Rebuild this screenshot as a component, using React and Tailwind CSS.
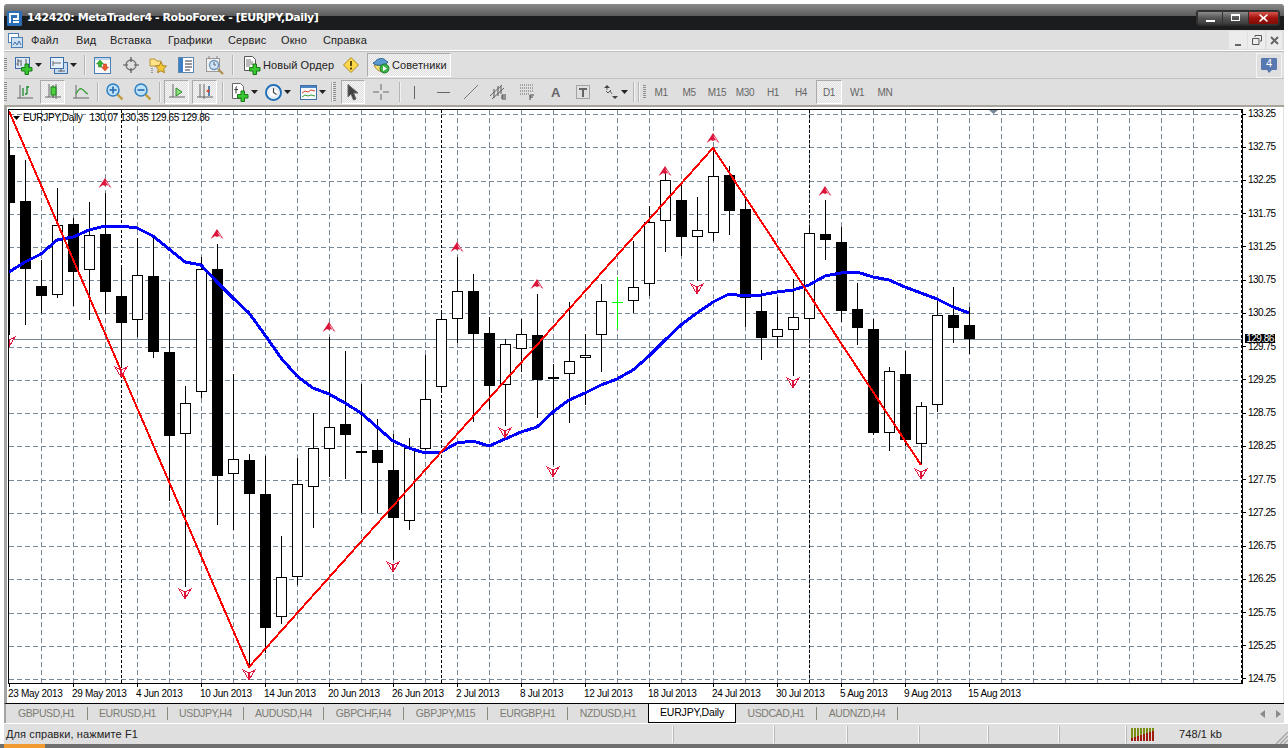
import React from 'react';

// [x, high, low, bodyTop, bodyBottom, white]
const candles = [
  [9, 140, 335, 155, 203, 0], [25, 160, 325, 201, 269, 0], [41, 260, 313, 286, 296, 0], [57, 188, 298, 225, 295, 1],
  [73, 218, 306, 224, 272, 0], [89, 202, 320, 235, 270, 1], [105, 193, 314, 234, 292, 0], [121, 265, 365, 296, 323, 0],
  [137, 238, 337, 275, 320, 1], [153, 237, 358, 276, 352, 0], [169, 282, 501, 352, 436, 0], [185, 386, 587, 403, 434, 1],
  [201, 257, 398, 269, 392, 1], [217, 244, 525, 269, 476, 0], [233, 374, 530, 459, 474, 1], [249, 454, 667, 460, 494, 0],
  [265, 456, 653, 494, 628, 0], [281, 536, 624, 577, 617, 1], [297, 458, 585, 484, 577, 1], [313, 413, 528, 448, 487, 1],
  [329, 337, 477, 427, 449, 1], [345, 351, 479, 424, 435, 0], [361, 384, 513, 451, 453, 0], [377, 419, 513, 450, 463, 0],
  [393, 434, 560, 470, 518, 0], [409, 438, 530, 448, 521, 1], [425, 355, 450, 399, 449, 1], [441, 310, 393, 319, 387, 1],
  [457, 257, 343, 291, 319, 1], [473, 274, 422, 291, 334, 0], [489, 317, 409, 333, 386, 0], [505, 339, 426, 344, 385, 1],
  [521, 319, 372, 334, 349, 1], [537, 294, 418, 335, 380, 0], [553, 364, 465, 377, 379, 0], [569, 302, 423, 361, 374, 1],
  [585, 334, 405, 355, 358, 1], [601, 284, 372, 301, 335, 1], [633, 241, 313, 287, 301, 1],
  [649, 206, 296, 222, 284, 1], [665, 170, 252, 180, 221, 1], [681, 185, 256, 200, 237, 0], [697, 197, 281, 230, 237, 1],
  [713, 150, 241, 176, 233, 1], [729, 166, 235, 175, 211, 0], [745, 198, 327, 209, 298, 0], [761, 290, 360, 311, 338, 0],
  [777, 297, 348, 329, 337, 1], [793, 279, 376, 317, 330, 1], [809, 228, 336, 233, 319, 1], [825, 200, 260, 234, 240, 0],
  [841, 227, 322, 242, 311, 0], [857, 283, 345, 309, 328, 0], [873, 319, 435, 329, 433, 0], [889, 367, 451, 371, 433, 1],
  [905, 351, 446, 374, 440, 0], [921, 402, 465, 406, 444, 1], [937, 300, 412, 315, 405, 1], [953, 287, 343, 315, 328, 0],
  [969, 307, 354, 325, 339, 0],
];

const ma = '9,272 25,262 41,254 57,240 73,237 89,230 105,226 121,226 137,228 153,236 169,249 185,262 201,265 217,282 233,298 249,313 265,335 281,358 297,376 313,388 329,394 345,403 361,413 377,427 393,441 409,448 425,453 441,452 457,443 473,441 489,446 505,439 521,432 537,427 553,412 569,400 585,393 601,385 617,379 633,370 649,356 665,340 681,325 697,313 713,302 729,294 745,296 761,295 777,292 793,290 809,285 825,276 841,273 857,272 873,277 889,280 905,287 921,293 937,299 953,307 969,313';

const upMarks = [[105, 183], [217, 234], [329, 327], [457, 247], [537, 284], [665, 171], [713, 138], [825, 191]];
const downMarks = [[9, 342], [121, 372], [185, 594], [249, 675], [393, 567], [505, 433], [553, 472], [697, 289], [793, 383], [921, 474]];

const gridY = [114, 147, 181, 214, 247, 280, 313, 347, 380, 413, 446, 480, 513, 546, 579, 613, 646, 679];
const gridX = Array.from({ length: 37 }, (_, i) => 41 + i * 32);

const prices = ['133.25', '132.75', '132.25', '131.75', '131.25', '130.75', '130.25', '129.75', '129.25', '128.75', '128.25', '127.75', '127.25', '126.75', '126.25', '125.75', '125.25', '124.75'];
const dates = ['23 May 2013', '29 May 2013', '4 Jun 2013', '10 Jun 2013', '14 Jun 2013', '20 Jun 2013', '26 Jun 2013', '2 Jul 2013', '8 Jul 2013', '12 Jul 2013', '18 Jul 2013', '24 Jul 2013', '30 Jul 2013', '5 Aug 2013', '9 Aug 2013', '15 Aug 2013'];

function Chart() {
  return (
    <svg width="1235" height="575" viewBox="8 109 1235 575" className="block shrink-0">
      <rect x="8" y="109" width="1235" height="575" fill="#fff" />
      <g stroke="#778899" strokeWidth="1" shapeRendering="crispEdges">
        {gridY.map((y) => <line key={y} x1="9" x2="1241" y1={y + 0.5} y2={y + 0.5} strokeDasharray="5 3" />)}
        {gridX.map((x) => <line key={x} x1={x + 0.5} x2={x + 0.5} y1="110" y2="683" strokeDasharray="5 3" />)}
        <line x1="9" x2="1242" y1="339.5" y2="339.5" />
      </g>
      <path d="M989 110h9l-4.5 4z" fill="#778899" />
      <g stroke="#000" strokeWidth="1" shapeRendering="crispEdges">
        {[121, 441, 809, 1241].map((x) => <line key={x} x1={x + 0.5} x2={x + 0.5} y1="110" y2="683" strokeDasharray="3 2" />)}
      </g>
      <g shapeRendering="crispEdges">
        {candles.map(([x, hi, lo, top, bot, white]) => (
          <g key={x}>
            <rect x={x} y={hi} width="1" height={lo - hi} fill="#000" />
            {white ? (
              <rect x={x - 4.5} y={top + 0.5} width="10" height={bot - top - 1} fill="#fff" stroke="#000" />
            ) : (
              <rect x={x - 5} y={top} width="11" height={bot - top} fill="#000" />
            )}
          </g>
        ))}
        <rect x="617" y="277" width="1" height="52" fill="#00ff00" />
        <rect x="612" y="302" width="11" height="1" fill="#00ff00" />
      </g>
      <polyline points={ma} fill="none" stroke="#0000ff" strokeWidth="3" strokeLinejoin="round" shapeRendering="crispEdges" />
      <polyline points="9,111 249,667 713,148 921,465" fill="none" stroke="#ff0000" strokeWidth="2" shapeRendering="crispEdges" />
      {upMarks.map(([x, y]) => (
        <g key={x} transform={`translate(${x} ${y})`}>
          <path d="M0-5L6.500 5 2 2 0 3-2 2-6.500 5Z" fill="#dc143c" />
          <path d="M1-1.500L4 3" stroke="#fff" strokeWidth="0.800" />
        </g>
      ))}
      {downMarks.map(([x, y]) => (
        <g key={x} transform={`translate(${x} ${y})`} shapeRendering="crispEdges">
          <path d="M-6-5L-1-2.500H1L6-5 0 5Z" fill="#fff" stroke="#dc143c" strokeWidth="1" />
          <path d="M-1-2H1V4H-1Z" fill="#dc143c" />
        </g>
      ))}
      <rect x="8.500" y="109.500" width="1234" height="574" fill="none" stroke="#000" shapeRendering="crispEdges" />
    </svg>
  );
}

function Grip({ h = 'h-[20px]' }) {
  return <div className={`w-[3px] shrink-0 ${h} bg-[repeating-linear-gradient(#8f8f8f_0_1px,transparent_1px_2px)]`} />;
}

function Sep({ className = '' }) {
  return <div className={`w-[2px] h-[20px] shrink-0 border-l border-[#b5b5b5] bg-[#f2f2f2] ${className}`} />;
}

function DropArrow({ className = '' }) {
  return (
    <svg width="7" height="4" viewBox="0 0 7 4" className={`shrink-0 ${className}`}>
      <path d="M0 0h7L3.500 4z" fill="#222" />
    </svg>
  );
}

function Pressed({ className = '', children }) {
  return (
    <div className={`shrink-0 flex items-center border border-t-[#aaa] border-l-[#aaa] border-r-white border-b-white bg-[repeating-conic-gradient(#dedede_0_25%,#f6f6f6_0_50%)] bg-size-[2px_2px] ${className}`}>
      {children}
    </div>
  );
}

const Plus = () => <path d="M10 8h3.500v3.500H17V15h-3.500v3.500H10V15H6.500v-3.500H10z" fill="#39c632" stroke="#167a16" strokeWidth="1" />;

function Ico({ w = 16, h = 16, className = '', children }) {
  return (
    <svg width={w} height={h} viewBox={`0 0 ${w} ${h}`} className={`shrink-0 ${className}`}>
      {children}
    </svg>
  );
}

const AddChartIcon = ({ className }) => (
  <Ico w={18} h={19} className={className}>
    <rect x="0.500" y="1.500" width="14" height="11" fill="#dce9f7" stroke="#3d6ea8" />
    <path d="M3 3v7M3 5h2M3 8H1.500M6 4v6M11 3v6" stroke="#555" fill="none" />
    <Plus />
  </Ico>
);

const ProfilesIcon = ({ className }) => (
  <Ico w={18} h={18} className={className}>
    <rect x="4.500" y="6.500" width="13" height="11" fill="#c9ddf2" stroke="#3d6ea8" />
    <rect x="0.500" y="1.500" width="13" height="11" fill="#e6f0fa" stroke="#3d6ea8" />
    <path d="M3 5v5M3 7h8M8 15h7M11 13v3" stroke="#666" fill="none" />
  </Ico>
);

const WatchIcon = ({ className }) => (
  <Ico w={17} h={17} className={className}>
    <rect x="0.500" y="0.500" width="16" height="16" fill="#f8f8f8" stroke="#4a7fb5" />
    <path d="M1 1h15v2H1z" fill="#bcd4ec" />
    <path d="M6 3l3.500 4H7.500v3H4.500V7H2.500z" fill="#35b52f" stroke="#1c7a1c" strokeWidth=".5" />
    <path d="M11 14l-3.500-4H9.500V7h3v3h2z" fill="#ef5a2a" stroke="#b52a10" strokeWidth=".5" />
  </Ico>
);

const TargetIcon = ({ className }) => (
  <Ico w={16} h={16} className={className}>
    <circle cx="8" cy="8" r="5" fill="none" stroke="#777" strokeWidth="1.300" />
    <path d="M8 0v5M8 11v5M0 8h5M11 8h5" stroke="#555" strokeWidth="1.200" />
  </Ico>
);

const StarFolderIcon = ({ className }) => (
  <Ico w={18} h={18} className={className}>
    <path d="M1 3h5l1.500 2H12v5H1z" fill="#ffe28a" stroke="#b99433" />
    <path d="M12 6l1.700 3.600 3.800.5-2.800 2.700.7 3.900-3.400-1.900-3.400 1.900.7-3.900-2.800-2.700 3.800-.5z" fill="#f6c93a" stroke="#a98320" />
    <path d="M3 12v5" stroke="#555" strokeDasharray="1 1" />
  </Ico>
);

const ListIcon = ({ className }) => (
  <Ico w={16} h={16} className={className}>
    <rect x="0.500" y="0.500" width="15" height="15" fill="#fff" stroke="#5b87b3" />
    <rect x="1" y="1" width="4" height="14" fill="#3d7fc4" />
    <path d="M7 4h7M7 7h7M7 10h7M7 13h5" stroke="#334" fill="none" />
  </Ico>
);

const TesterIcon = ({ className }) => (
  <Ico w={18} h={19} className={className}>
    <rect x="0.500" y="2.500" width="13" height="13" fill="#f1f1f1" stroke="#999" />
    <path d="M3 0v3M11 0v3" stroke="#888" />
    <circle cx="8" cy="9" r="4.500" fill="#cfe4f6" stroke="#6a93b8" strokeWidth="1.300" />
    <path d="M8 6v3h2" stroke="#666" fill="none" />
    <path d="M12 13l5 5" stroke="#b08d4a" strokeWidth="2.200" />
  </Ico>
);

const OrderIcon = ({ className }) => (
  <Ico w={18} h={19} className={className}>
    <path d="M1.500.5h8l3 3v11h-11z" fill="#fff" stroke="#555" />
    <path d="M3 4h5M3 6h7M3 8h7M3 10h4" stroke="#777" />
    <Plus />
  </Ico>
);

const WarnIcon = ({ className }) => (
  <Ico w={16} h={16} className={className}>
    <path d="M8 .5L15.500 8 8 15.500.5 8z" fill="#ffd84a" stroke="#a98a2a" />
    <path d="M7 4h2v5H7zM7 10.500h2v2H7z" fill="#5a4a10" />
  </Ico>
);

const AdvisorIcon = ({ className }) => (
  <Ico w={18} h={18} className={className}>
    <path d="M2 9c2 5 6 7 10 7l3-6z" fill="#f4dc70" stroke="#a98d2a" />
    <path d="M3 6c2-4 9-5 11-1l2 1c-1 3-12 5-15 1z" fill="#5a9ad0" stroke="#2f6896" />
    <circle cx="12.500" cy="12.500" r="4.500" fill="#3db14a" stroke="#1d7a2a" />
    <path d="M11 10l4 2.500-4 2.500z" fill="#fff" />
  </Ico>
);

const Axes = () => <path d="M3 1v13M0 14h16" stroke="#666" strokeWidth="1" fill="none" />;

const BarsIcon = ({ className }) => (
  <Ico w={16} h={16} className={className}>
    <Axes />
    <path d="M6 4v8M10 2v8M8 10h2M10 3h2" stroke="#1a8a2a" strokeWidth="1.300" fill="none" />
  </Ico>
);

const CandleIcon = ({ className }) => (
  <Ico w={16} h={16} className={className}>
    <path d="M4 0v13M0 13h16M11 0v15" stroke="#666" fill="none" />
    <path d="M8 1v13" stroke="#555" />
    <rect x="6" y="3" width="5" height="8" fill="#4fd03f" stroke="#1a7a1a" />
  </Ico>
);

const LineIcon = ({ className }) => (
  <Ico w={16} h={16} className={className}>
    <Axes />
    <path d="M3 10c2-4 4-6 6-5s3 4 6 5" stroke="#3aa03a" strokeWidth="1.300" fill="none" />
  </Ico>
);

const ZoomIcon = ({ minus, className }) => (
  <Ico w={17} h={18} className={className}>
    <circle cx="7" cy="7" r="6" fill="#bfe2fb" stroke="#2d7fc0" strokeWidth="1.500" />
    <path d="M3.500 7h7" stroke="#2d6fb0" strokeWidth="1.700" />
    {!minus && <path d="M7 3.500v7" stroke="#2d6fb0" strokeWidth="1.700" />}
    <path d="M11.500 11.500l5 5" stroke="#c09a3a" strokeWidth="2.400" />
  </Ico>
);

const AutoScrollIcon = ({ className }) => (
  <Ico w={16} h={16} className={className}>
    <path d="M4 0v13M0 13h16" stroke="#666" fill="none" />
    <path d="M7 4l6 4-6 4z" fill="#8fe27a" stroke="#2a8a2a" />
  </Ico>
);

const ShiftIcon = ({ className }) => (
  <Ico w={16} h={16} className={className}>
    <path d="M3 0v13M0 13h16M7 0v15" stroke="#666" fill="none" />
    <path d="M12 2v10" stroke="#2d5f9a" strokeWidth="1.500" />
    <path d="M9 7l3-2v4z" fill="#d8401e" />
  </Ico>
);

const AddIndicatorIcon = ({ className }) => (
  <Ico w={18} h={19} className={className}>
    <path d="M1.500.5h8l3 3v12h-11z" fill="#fff" stroke="#666" />
    <path d="M6 3.500c-1 0-1 1-1 2v5M3.500 6.500h3.500" stroke="#333" fill="none" />
    <Plus />
  </Ico>
);

const ClockIcon = ({ className }) => (
  <Ico w={17} h={17} className={className}>
    <circle cx="8.500" cy="8.500" r="7.500" fill="#fff" stroke="#1f6fb8" strokeWidth="2" />
    <path d="M8.500 4v4.500l3 2" stroke="#444" strokeWidth="1.200" fill="none" />
    <circle cx="8.500" cy="8.500" r="4.800" fill="none" stroke="#cfd8df" />
  </Ico>
);

const TemplateIcon = ({ className }) => (
  <Ico w={17} h={15} className={className}>
    <rect x="0.500" y="0.500" width="16" height="14" fill="#f7fafc" stroke="#3d6ea8" />
    <rect x="1" y="1" width="15" height="2" fill="#4d86c4" />
    <path d="M2 8l3-2 3 1 3-2 4 1" stroke="#d9442a" fill="none" />
    <path d="M2 12l3-2 3 1 3-1 4 1" stroke="#3aa03a" fill="none" />
  </Ico>
);

const CursorIcon = ({ className }) => (
  <Ico w={12} h={17} className={className}>
    <path d="M1 .5V13l3-3 2.500 6 2.500-1-2.500-6H11z" fill="#444" stroke="#666" />
  </Ico>
);

const CrossIcon = ({ className }) => (
  <Ico w={16} h={16} className={className}>
    <path d="M8 0v6M8 10v6M0 8h6M10 8h6" stroke="#666" />
  </Ico>
);

const ChannelIcon = ({ className }) => (
  <Ico w={16} h={16} className={className}>
    <path d="M0 12L12 1M2 15L14 4" stroke="#666" />
    <path d="M4 5v9M8 2v10M11 2v8" stroke="#555" />
    <path d="M12 11h4M12 13h4M12 15h4M12 11v4" stroke="#444" />
  </Ico>
);

const FiboIcon = ({ className }) => (
  <Ico w={14} h={16} className={className}>
    <path d="M0 1h13M0 4h13M0 7h13M0 10h9" stroke="#666" strokeDasharray="1 1" />
    <path d="M10 11h4M10 13h3M10 11v5" stroke="#444" />
  </Ico>
);

const TextBoxIcon = ({ className }) => (
  <Ico w={14} h={14} className={className}>
    <rect x="0.500" y="0.500" width="13" height="13" fill="none" stroke="#666" strokeDasharray="1 1" />
    <path d="M3 3h8v2H8v7H6V5H3z" fill="#666" />
  </Ico>
);

const ArrowsIcon = ({ className }) => (
  <Ico w={14} h={14} className={className}>
    <path d="M3 0l3 3H0zM11 14l3-3H8z" fill="#444" />
    <path d="M3 3v2M6 6l2 3" stroke="#666" />
    <path d="M2 6l2 2 3-3" stroke="#555" fill="none" />
  </Ico>
);

function Timeframe({ label, active }) {
  const text = <span className="text-[10px] tracking-[-0.4px] text-[#666]">{label}</span>;
  return (
    <div className="w-[28px] h-[24px] shrink-0 flex items-center justify-center">
      {active ? <Pressed className="w-[26px] h-[24px] justify-center">{text}</Pressed> : text}
    </div>
  );
}

function Tab({ label, w, sep = true }) {
  return (
    <div className={`${w} h-full shrink-0 flex items-center`}>
      <span className="flex-1 text-center text-[10.5px] tracking-[-0.4px] text-[#7c7c74]">{label}</span>
      {sep && <span className="w-px h-[13px] bg-[#8b8b80]" />}
    </div>
  );
}

function Cell({ w }) {
  return <div className={`${w} h-[17px] shrink-0 border-r border-r-[#f8f8f8] shadow-[1px_0_0_#b8b8b8]`} />;
}

export default function App() {
  return (
    <div className="w-[1288px] h-[748px] overflow-hidden bg-white flex flex-col font-['Liberation_Sans',sans-serif]">
      <div className="h-[4px] shrink-0" />

      {/* Заголовок окна */}
      <div className="ml-[4px] w-[1280px] h-[26px] shrink-0 flex items-center pl-[3px] pr-[5px] rounded-t-[3px] bg-[linear-gradient(#8a8a8a_0,#5c5c5c_12px,#1b1c1e_12px,#1b1c1e_100%)]">
        <svg width="15" height="15" viewBox="0 0 15 15" className="shrink-0 mt-[2px]">
          <rect width="15" height="15" rx="1" fill="#2a6fb8" />
          <path d="M3 12V3h8v5H6M6 11h6" stroke="#fff" strokeWidth="1.800" fill="none" />
        </svg>
        <span className="ml-[5px] mt-[3px] font-['DejaVu_Sans',sans-serif] text-[11px] font-bold text-white tracking-[-0.43px] whitespace-nowrap">142420: MetaTrader4 - RoboForex - [EURJPY,Daily]</span>
        <div className="ml-auto flex mt-[1px] rounded-[2px] shadow-[0_0_0_1px_#2c2c2c]">
          <div className="w-[26px] h-[14px] flex items-end justify-center pb-[2px] border border-[#333] rounded-l-[2px] bg-[linear-gradient(#8c8c8c,#555_50%,#3b3b3b)]">
            <span className="w-[9px] h-[2px] bg-white" />
          </div>
          <div className="w-[26px] h-[14px] flex items-center justify-center border border-l-0 border-[#333] bg-[linear-gradient(#8c8c8c,#555_50%,#3b3b3b)]">
            <span className="w-[9px] h-[7px] border border-t-2 border-white" />
          </div>
          <div className="w-[30px] h-[14px] flex items-center justify-center border border-l-0 border-[#333] rounded-r-[2px] bg-[linear-gradient(#d8554d,#a3120c_50%,#7e0d08)]">
            <svg width="9" height="8" viewBox="0 0 9 8"><path d="M1 0l3.500 3L8 0l1 1-3 3 3 3-1 1-3.500-3L1 8 0 7l3-3-3-3z" fill="#fff" /></svg>
          </div>
        </div>
      </div>

      {/* Меню */}
      <div className="ml-[4px] w-[1280px] h-[20px] shrink-0 flex items-center bg-[#dfdfdf] text-[11px] tracking-[0.1px] text-[#222]">
        <svg width="15" height="15" viewBox="0 0 15 15" className="ml-[4px] mr-[8px] shrink-0">
          <rect x="0.500" y="0.500" width="10" height="9" fill="#fff" stroke="#4d7fb5" />
          <rect x="3.500" y="4.500" width="11" height="10" fill="#cfe0f3" stroke="#4d7fb5" />
          <path d="M5 12l2-3 2 3 2-4 2 4" stroke="#3d6ea8" fill="none" />
        </svg>
        <span className="w-[45px]">Файл</span>
        <span className="w-[34px]">Вид</span>
        <span className="w-[58px]">Вставка</span>
        <span className="w-[60px]">Графики</span>
        <span className="w-[53px]">Сервис</span>
        <span className="w-[42px]">Окно</span>
        <span>Справка</span>
        <div className="ml-auto mr-[2px] flex gap-[1px] items-center">
          <div className="w-[18px] h-[18px] bg-[#ececec] flex items-end justify-center pb-[3px]"><span className="w-[6px] h-[2px] bg-[#666]" /></div>
          <div className="w-[17px] h-[18px] bg-[#ececec] flex items-center justify-center">
            <svg width="10" height="10" viewBox="0 0 10 10"><path d="M3 2V.5h6.500V6H8M.5 3.500h6.500v6H.5z" fill="none" stroke="#555" /></svg>
          </div>
          <div className="w-[15px] h-[18px] ml-[1px] bg-[#ececec] flex items-center justify-center">
            <svg width="9" height="9" viewBox="0 0 9 9"><path d="M1 1l7 7M8 1L1 8" stroke="#666" strokeWidth="2" /></svg>
          </div>
        </div>
      </div>
      <div className="ml-[4px] w-[1280px] h-[2px] shrink-0 bg-white border-b border-[#bdbdbd]" />

      {/* Панель 1 */}
      <div className="ml-[4px] w-[1280px] h-[26px] shrink-0 flex items-center bg-[#dfdfdf] text-[11px] tracking-[0.1px] text-[#222]">
        <Grip h="h-[14px]" />
        <AddChartIcon className="ml-[8px]" />
        <DropArrow className="ml-[2px]" />
        <ProfilesIcon className="ml-[8px]" />
        <DropArrow className="ml-[2px]" />
        <Sep className="ml-[7px]" />
        <WatchIcon className="ml-[8px]" />
        <TargetIcon className="ml-[12px]" />
        <StarFolderIcon className="ml-[10px]" />
        <ListIcon className="ml-[11px]" />
        <TesterIcon className="ml-[12px]" />
        <Sep className="ml-[8px]" />
        <OrderIcon className="ml-[9px]" />
        <span className="ml-[2px] w-[70px] whitespace-nowrap">Новый Ордер</span>
        <WarnIcon className="ml-[10px]" />
        <Pressed className="ml-[8px] w-[84px] h-[24px]">
          <AdvisorIcon className="ml-[4px]" />
          <span className="ml-[2px] whitespace-nowrap">Советники</span>
        </Pressed>
        <div className="ml-auto mr-[2px] w-[26px] h-[25px] shrink-0 flex items-center justify-center border border-[#f4f4f4]">
          <div className="relative w-[16px] h-[15px]">
            <div className="w-[16px] h-[12px] rounded-[1px] bg-[#5878b0] flex items-center justify-center text-[11px] text-white">4</div>
            <svg width="5" height="3" viewBox="0 0 5 3" className="absolute left-[6px] top-[12px]"><path d="M0 0h5L2 3z" fill="#5878b0" /></svg>
          </div>
        </div>
      </div>
      <div className="ml-[4px] w-[1280px] h-px shrink-0 bg-[#c2c2c2]" />

      {/* Панель 2 */}
      <div className="ml-[4px] w-[1280px] h-[26px] shrink-0 flex items-center bg-[#dfdfdf]">
        <Grip />
        <BarsIcon className="ml-[10px]" />
        <Pressed className="ml-[7px] w-[25px] h-[24px] justify-center"><CandleIcon /></Pressed>
        <LineIcon className="ml-[8px]" />
        <Sep className="ml-[8px]" />
        <ZoomIcon className="ml-[7px]" />
        <ZoomIcon minus className="ml-[11px]" />
        <Sep className="ml-[8px]" />
        <Pressed className="ml-[3px] w-[25px] h-[24px] justify-center"><AutoScrollIcon /></Pressed>
        <Pressed className="ml-[3px] w-[25px] h-[24px] justify-center"><ShiftIcon /></Pressed>
        <Sep className="ml-[5px]" />
        <AddIndicatorIcon className="ml-[7px]" />
        <DropArrow className="ml-[2px]" />
        <ClockIcon className="ml-[7px]" />
        <DropArrow className="ml-[2px]" />
        <TemplateIcon className="ml-[9px]" />
        <DropArrow className="ml-[2px]" />
        <Sep className="ml-[5px]" />
        <Grip />
        <Pressed className="ml-[5px] w-[24px] h-[24px] justify-center"><CursorIcon /></Pressed>
        <CrossIcon className="ml-[8px]" />
        <Sep className="ml-[10px]" />
        <span className="ml-[13px] w-px h-[13px] shrink-0 bg-[#666]" />
        <span className="ml-[22px] w-[13px] h-px shrink-0 bg-[#666]" />
        <svg width="14" height="14" viewBox="0 0 14 14" className="ml-[14px] shrink-0"><path d="M0 14L14 0" stroke="#777" /></svg>
        <ChannelIcon className="ml-[12px]" />
        <FiboIcon className="ml-[14px]" />
        <span className="ml-[17px] w-[8px] text-[13px] font-bold leading-none text-[#666]">A</span>
        <TextBoxIcon className="ml-[17px]" />
        <ArrowsIcon className="ml-[14px]" />
        <DropArrow className="ml-[3px]" />
        <Sep className="ml-[5px]" />
        <Sep className="ml-[3px]" />
        <div className="ml-[3px]"><Grip h="h-[14px]" /></div>
        <div className="ml-[1px]" />
        <Timeframe label="M1" />
        <Timeframe label="M5" />
        <Timeframe label="M15" />
        <Timeframe label="M30" />
        <Timeframe label="H1" />
        <Timeframe label="H4" />
        <Timeframe label="D1" active />
        <Timeframe label="W1" />
        <Timeframe label="MN" />
      </div>
      <div className="ml-[4px] w-[1280px] h-[2px] shrink-0 bg-[#a8a49c]" />

      {/* График */}
      <div className="ml-[4px] w-[1280px] h-[596px] shrink-0 flex flex-col border-l-[3px] border-l-[#a3a3a3] border-r border-r-[#e2e2e2] pl-[1px] pt-[2px]">
        <div className="flex h-[575px] shrink-0">
          <div className="relative w-[1235px] h-[575px] shrink-0">
            <Chart />
            <div className="absolute left-[5px] top-[3px] flex items-center text-[10px] leading-[12px] text-black whitespace-nowrap">
              <svg width="7" height="4" viewBox="0 0 7 4" className="shrink-0"><path d="M0 0h7L3.500 4z" fill="#000" /></svg>
              <span className="ml-[3px] tracking-[-0.3px]">EURJPY,Daily</span>
              <span className="ml-[7px] tracking-[-0.4px]">130.07 130.35 129.65 129.86</span>
            </div>
          </div>
          <div className="relative w-[40px] h-[577px] -mt-[1px] shrink-0 flex flex-col justify-between">
            {prices.map((p) => (
              <div key={p} className="h-[12px] flex items-center text-[10px] tracking-[-0.5px] text-black">
                <span className="w-[3px] h-px bg-black shrink-0" />
                <span className="ml-[2px] leading-[8px]">{p}</span>
              </div>
            ))}
            <div className="absolute left-[2px] top-[226px] w-[30px] h-[9px] bg-black flex items-center justify-center text-[10px] leading-[9px] tracking-[-0.5px] text-white">129.86</div>
          </div>
        </div>
        <div className="flex flex-1 items-start">
          {dates.map((d) => (
            <div key={d} className="w-[64px] shrink-0">
              <div className="ml-[1px] w-px h-[3px] bg-black" />
              <div className="text-[10px] leading-[13px] tracking-[-0.3px] text-black whitespace-nowrap">{d}</div>
            </div>
          ))}
        </div>
      </div>

      {/* Вкладки */}
      <div className="ml-[4px] w-[1280px] h-[20px] shrink-0 flex items-center bg-[#dfdfdf] border-t border-black border-l-2 border-l-[#a3a3a3]">
        <Tab label="GBPUSD,H1" w="w-[82px]" />
        <Tab label="EURUSD,H1" w="w-[80px]" />
        <Tab label="USDJPY,H4" w="w-[76px]" />
        <Tab label="AUDUSD,H4" w="w-[80px]" />
        <Tab label="GBPCHF,H4" w="w-[80px]" />
        <Tab label="GBPJPY,M15" w="w-[84px]" />
        <Tab label="EURGBP,H1" w="w-[80px]" />
        <Tab label="NZDUSD,H1" w="w-[80px]" sep={false} />
        <div className="w-[88px] h-full shrink-0 flex items-center justify-center bg-white border-x border-b border-black text-[10.5px] tracking-[-0.2px] text-black">EURJPY,Daily</div>
        <Tab label="USDCAD,H1" w="w-[81px]" />
        <Tab label="AUDNZD,H4" w="w-[81px]" />
        <div className="ml-auto mr-[3px] flex gap-[11px]">
          <svg width="5" height="8" viewBox="0 0 5 8"><path d="M5 0v8L0 4z" fill="#8a8a8a" /></svg>
          <svg width="5" height="8" viewBox="0 0 5 8"><path d="M0 0v8l5-4z" fill="#8a8a8a" /></svg>
        </div>
      </div>

      {/* Строка состояния */}
      <div className="ml-[4px] w-[1284px] h-[21px] shrink-0 flex items-center bg-[#dfdfdf] border-t border-white text-[11px] tracking-[0.1px] text-[#222]">
        <div className="w-[669px] h-[17px] shrink-0 pl-[2px] leading-[17px] border-r border-r-[#f8f8f8] shadow-[1px_0_0_#b8b8b8]">Для справки, нажмите F1</div>
        <Cell w="w-[101px]" />
        <Cell w="w-[73px]" />
        <Cell w="w-[72px]" />
        <Cell w="w-[69px]" />
        <Cell w="w-[71px]" />
        <Cell w="w-[67px]" />
        <svg width="24" height="13" viewBox="0 0 24 13" className="ml-[5px] shrink-0">
          {Array.from({ length: 8 }, (_, i) => (
            <g key={i}>
              <rect x={i * 3} y="0" width="2" height={10 - i} fill="#7a8f12" />
              <rect x={i * 3} y={10 - i} width="2" height={i + 3} fill="#a01c0c" />
            </g>
          ))}
        </svg>
        <span className="ml-[24px] whitespace-nowrap">748/1 kb</span>
        <svg width="13" height="13" viewBox="0 0 13 13" className="ml-auto self-end shrink-0">
          <path d="M13 1L1 13M13 5L5 13M13 9L9 13" stroke="#a8a8a8" strokeWidth="1.500" />
        </svg>
      </div>

      <div className="h-[4px] shrink-0 bg-[#6f6f6f]">
        <div className="ml-[4px] w-[41px] h-full bg-[#f09a30]" />
      </div>
    </div>
  );
}
